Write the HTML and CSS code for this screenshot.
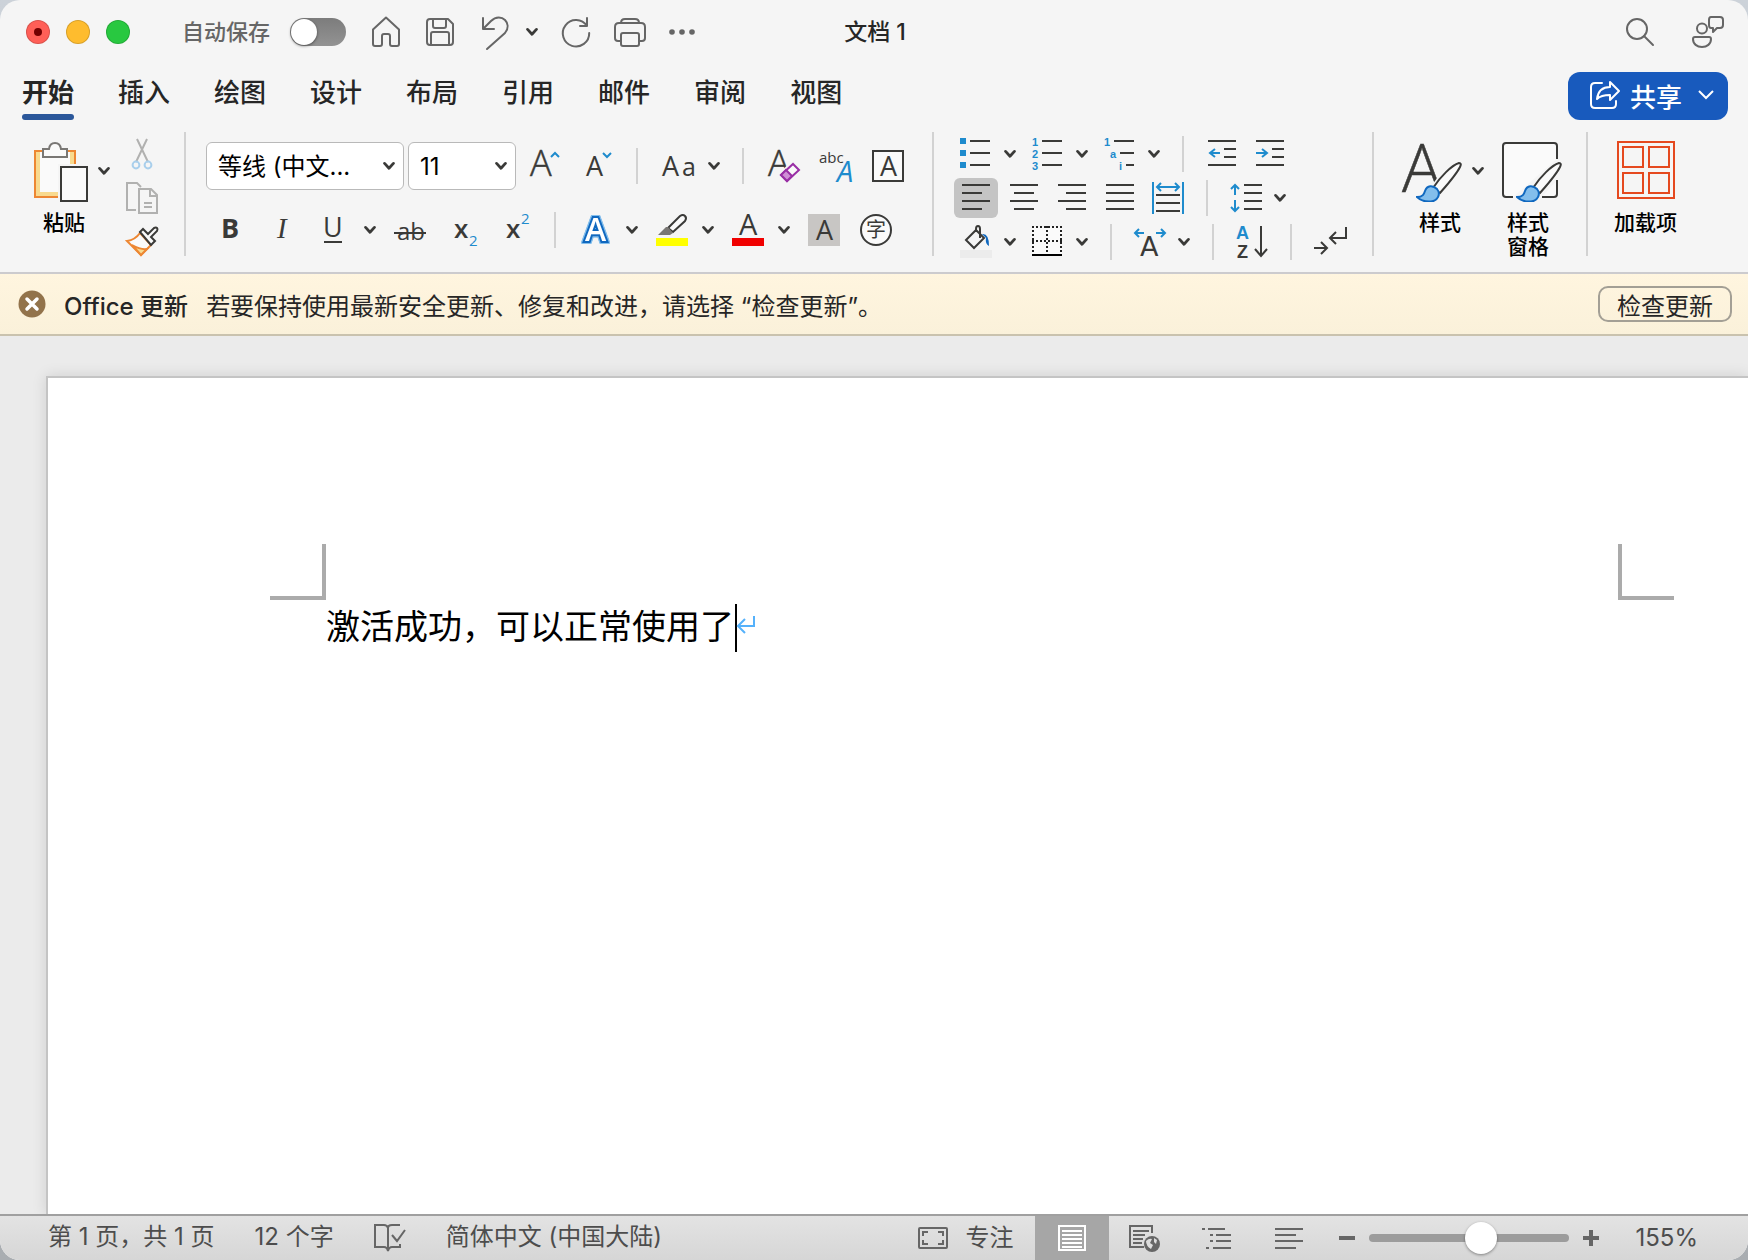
FILE: index.html
```html
<!DOCTYPE html>
<html lang="zh-CN">
<head>
    <meta charset="UTF-8">
    <title>文档1</title>
    <link rel="stylesheet" href="styles.css">
</head>
<body>
    <svg class="defs" aria-hidden="true">
        <symbol id="chevron" viewBox="0 0 12 10"><path d="M1.6 2.4 6 7.2l4.4-4.8" fill="none" stroke="currentColor" stroke-width="2.8" stroke-linecap="round" stroke-linejoin="round"/></symbol>
        <symbol id="brush" viewBox="0 0 46 40">
            <path d="M17 26C24 15 36 3 43 1q3 0 1 4C40 13 31 23 24 31z" fill="#fafafa" stroke="#f5f5f5" stroke-width="5"/>
            <path d="M17 26C24 15 36 3 43 1q3 0 1 4C40 13 31 23 24 31z" fill="#fafafa" stroke="#3a3a38" stroke-width="2"/>
            <path d="M1 35c6 0 7-3 8-6 2-6 8-6 12-2 4 5 1 12-6 12.500C9 40 4 38 1 35z" fill="#83beec" stroke="#1068bf" stroke-width="2"/>
        </symbol>
    </svg>
    <div class="window">
        <header class="titlebar">
            <div class="title-left">
                <div class="lights">
                    <button class="light light-red" aria-label="关闭"></button>
                    <button class="light light-yellow" aria-label="最小化"></button>
                    <button class="light light-green" aria-label="缩放"></button>
                </div>
                <label class="autosave">自动保存 <input type="checkbox" class="toggle"></label>
                <div class="quick">
                    <button aria-label="主页"><svg class="icon thin" viewBox="0 0 32 32"><path d="M3 13.500 16 1.500l13 12V28q0 2-2 2h-5q-2 0-2-2v-8q0-2-2-2h-4q-2 0-2 2v8q0 2-2 2H5q-2 0-2-2z"/></svg></button>
                    <button aria-label="保存"><svg class="icon thin" viewBox="0 0 32 32"><path d="M6 3h18l5 5v18q0 3-3 3H6q-3 0-3-3V6q0-3 3-3zM9 3v7q0 2 2 2h9q2 0 2-2V3M7 29V18q0-2 2-2h14q2 0 2 2v11"/></svg></button>
                    <div class="split">
                        <button aria-label="撤消"><svg class="icon thin" viewBox="0 0 32 32"><path d="M5 2v11h11M5 13 13 5c5-5 11-4 14-1s4 8 0 13L9 33"/></svg></button>
                        <button aria-label="撤消选项"><svg class="chev"><use href="#chevron"/></svg></button>
                    </div>
                    <button aria-label="重复"><svg class="icon thin" viewBox="0 0 32 32"><path d="M20 10h7V2M27 10A13.200 13.200 0 1 0 29.200 17"/></svg></button>
                    <button aria-label="打印"><svg class="icon thin" viewBox="0 0 32 32"><path d="M6 25H4q-3 0-3-3V11q0-4 4-4h22q4 0 4 4v11q0 3-3 3h-2M7 7q0-4 4-4h10q4 0 4 4M9 17h14q2 0 2 2v9q0 2-2 2H9q-2 0-2-2v-9q0-2 2-2z"/></svg></button>
                    <button aria-label="更多"><svg class="icon" viewBox="0 0 32 32" fill="#666"><circle cx="4" cy="16" r="2.800"/><circle cx="14" cy="16" r="2.800"/><circle cx="24" cy="16" r="2.800"/></svg></button>
                </div>
            </div>
            <h1 class="title">文档 1</h1>
            <div class="title-right">
                <button aria-label="搜索"><svg class="icon thin" viewBox="0 0 32 32"><circle cx="13" cy="13" r="10"/><path d="m20 20 9 9"/></svg></button>
                <button aria-label="批注"><svg class="icon thin" viewBox="0 0 32 32"><circle cx="10" cy="12.500" r="5"/><path d="M3 21h14q2 0 2 2c0 5-4 8-9 8s-9-3-9-8q0-2 2-2zM19 1h9q3 0 3 3v5q0 3-3 3h-3l-4 4v-4h-2q-2 0-2-3V4q0-3 2-3z"/></svg></button>
            </div>
        </header>

        <nav class="tabbar">
            <div class="tabs">
                <button class="tab active">开始</button>
                <button class="tab">插入</button>
                <button class="tab">绘图</button>
                <button class="tab">设计</button>
                <button class="tab">布局</button>
                <button class="tab">引用</button>
                <button class="tab">邮件</button>
                <button class="tab">审阅</button>
                <button class="tab">视图</button>
            </div>
            <button class="share">
                <svg class="icon" viewBox="0 0 32 32" fill="none" stroke="#fff" stroke-width="2" stroke-linejoin="round" stroke-linecap="round"><path d="M14 4H7q-4 0-4 4v17q0 4 4 4h17q4 0 4-4v-3M9 20c1-8 6-12 13-12V3l9 9-9 9v-5c-6 0-10 1-13 4z"/></svg>
                共享
                <svg class="share-chev" viewBox="0 0 16 10" fill="none" stroke="#fff" stroke-width="2"><path d="m1 1 7 7 7-7"/></svg>
            </button>
        </nav>

        <section class="ribbon">
            <div class="group clipboard">
                <div class="paste">
                    <button class="big">
                        <svg class="icon-big" viewBox="0 0 60 60"><path d="M1 9h40v46H1z" fill="#fafafa" stroke="#ed8733" stroke-width="2"/><path d="M4 10v42h23M38 10v14" fill="none" stroke="#f8da8f" stroke-width="4"/><path d="M44 22H24v36h30V22z" fill="#f5f5f5"/><path d="M9 7h6c1-8 11-8 12 0h6v8H9z" fill="#fafafa" stroke="#797774" stroke-width="2"/><path d="M27 25h26v34H27z" fill="#fafafa" stroke="#3a3a38" stroke-width="2"/></svg>
                        <span>粘贴</span>
                    </button>
                    <button class="big-arrow" aria-label="粘贴选项"><svg class="chev"><use href="#chevron"/></svg></button>
                </div>
                <div class="stack">
                    <button aria-label="剪切"><svg class="icon" viewBox="0 0 32 32" fill="none" stroke="#b1b1b0" stroke-width="2"><path d="M11 1 22 24M21 1 10 24"/><circle cx="10" cy="27" r="3.400" stroke="#a9cfec"/><circle cx="22" cy="27" r="3.400" stroke="#a9cfec"/></svg></button>
                    <button aria-label="复制"><svg class="icon" viewBox="0 0 32 32" fill="none" stroke="#b1b1b0" stroke-width="2"><path d="M10 28H1V1h10l4 4M13 7h12l6 6v18H13zM24 7v7h7M18 21h8M18 25h8"/></svg></button>
                    <button aria-label="格式刷"><svg class="icon" viewBox="0 0 32 32" fill="#fafafa" stroke-width="2"><path d="M1 15q8-1 13-8l11 12q-4 4-10 10z" stroke="#ed8733"/><path d="M6 19q9 5 15 4l-6 6z" fill="#f8da8f" stroke="#ed8733"/><path d="m14 6 3-3 5 5 6-6q2-1 3 0t0 3l-6 6 4 4-4 4z" stroke="#3a3a38"/></svg></button>
                </div>
            </div>

            <div class="group font-group">
                <div class="row">
                    <div class="combos">
                        <label class="combo combo-font"><select aria-label="字体"><option>等线 (中文...</option></select><svg class="chev"><use href="#chevron"/></svg></label>
                        <label class="combo combo-size"><select aria-label="字号"><option>11</option></select><svg class="chev"><use href="#chevron"/></svg></label>
                    </div>
                    <button class="tool" aria-label="增大字号"><svg class="icon" viewBox="0 0 32 32"><text x="2" y="26" font-size="36" class="light-letter">A</text><path class="blue" d="m23 7 4-4 4 4"/></svg></button>
                    <button class="tool" aria-label="减小字号"><svg class="icon" viewBox="0 0 32 32"><text x="6" y="26" font-size="27">A</text><path class="blue" d="m23 3 4 4 4-4"/></svg></button>
                    <i class="sep"></i>
                    <div class="split">
                        <button class="tool" aria-label="更改大小写"><svg class="icon" viewBox="0 0 32 32"><text x="0" y="26" font-size="27">A</text><text x="20" y="26" font-size="25">a</text></svg></button>
                        <button aria-label="大小写选项"><svg class="chev"><use href="#chevron"/></svg></button>
                    </div>
                    <i class="sep"></i>
                    <button class="tool" aria-label="清除格式"><svg class="icon" viewBox="0 0 32 32"><text x="0" y="26" font-size="36" class="light-letter">A</text><path d="m13 25 12-12 6 6-12 12z" fill="#fafafa" stroke="#f5f5f5" stroke-width="5"/><path d="m13 25 12-11 6 6-12 11z" fill="#fafafa" stroke="#992fa5" stroke-width="2"/><path d="m13 25 5-5 6 6-5 5z" fill="#d08fd6" stroke="#992fa5" stroke-width="2"/></svg></button>
                    <button class="tool" aria-label="拼音指南"><svg class="icon" viewBox="0 0 32 32"><text x="-1" y="13" font-size="15">abc</text><text x="17" y="32" font-size="29" class="blue-letter" font-style="italic">A</text></svg></button>
                    <button class="tool" aria-label="字符边框"><svg class="icon" viewBox="0 0 32 32"><path d="M1 1h30v30H1z" fill="#fafafa" stroke="#3a3a38" stroke-width="2"/><text x="8" y="26" font-size="27">A</text></svg></button>
                </div>
                <div class="row row-second">
                    <button class="tool" aria-label="加粗"><svg class="icon" viewBox="0 0 32 32"><text x="7" y="24" font-size="27" font-weight="700">B</text></svg></button>
                    <button class="tool" aria-label="倾斜"><svg class="icon" viewBox="0 0 32 32"><text x="11" y="24" font-size="29" class="serif-letter">I</text></svg></button>
                    <div class="split">
                        <button class="tool" aria-label="下划线"><svg class="icon" viewBox="0 0 32 32"><text x="5" y="23" font-size="27">U</text><path d="M6 28h18" stroke="#3a3a38" stroke-width="2"/></svg></button>
                        <button aria-label="下划线选项"><svg class="chev"><use href="#chevron"/></svg></button>
                    </div>
                    <button class="tool" aria-label="删除线"><svg class="icon" viewBox="0 0 32 32"><text x="3" y="26" font-size="24">ab</text><path d="M0 19h32" stroke="#3a3a38" stroke-width="2"/></svg></button>
                    <button class="tool" aria-label="下标"><svg class="icon" viewBox="0 0 32 32"><text x="8" y="24" font-size="26" font-weight="600">x</text><text x="23" y="32" font-size="15" class="blue-letter">2</text></svg></button>
                    <button class="tool" aria-label="上标"><svg class="icon" viewBox="0 0 32 32"><text x="8" y="24" font-size="26" font-weight="600">x</text><text x="23" y="10" font-size="15" class="blue-letter">2</text></svg></button>
                    <i class="sep"></i>
                    <div class="split">
                        <button class="tool" aria-label="文本效果"><svg class="icon" viewBox="0 0 32 32"><text x="5" y="27" font-size="32" font-weight="600" class="glow">A</text></svg></button>
                        <button aria-label="文本效果选项"><svg class="chev"><use href="#chevron"/></svg></button>
                    </div>
                    <div class="split">
                        <button class="tool" aria-label="突出显示"><svg class="icon" viewBox="0 0 32 32"><path d="M12 14 24 2q3-2 5 0t0 5L17 18z" fill="#fafafa" stroke="#3a3a38" stroke-width="2"/><path d="M10 13h2l5 6-3 2H2z" fill="#797774"/><path d="M0 24h32v8H0z" fill="#ff0"/></svg></button>
                        <button aria-label="突出显示选项"><svg class="chev"><use href="#chevron"/></svg></button>
                    </div>
                    <div class="split">
                        <button class="tool" aria-label="字体颜色"><svg class="icon" viewBox="0 0 32 32"><text x="7" y="21" font-size="29">A</text><path d="M0 24h32v8H0z" fill="#f00000"/></svg></button>
                        <button aria-label="字体颜色选项"><svg class="chev"><use href="#chevron"/></svg></button>
                    </div>
                    <button class="tool" aria-label="字符底纹"><svg class="icon" viewBox="0 0 32 32"><path d="M0 0h32v32H0z" fill="#c8c6c4"/><text x="8" y="26" font-size="27">A</text></svg></button>
                    <button class="tool" aria-label="带圈字符"><svg class="icon" viewBox="0 0 32 32"><circle cx="16" cy="16" r="15" fill="#fafafa" stroke="#3a3a38" stroke-width="2"/><text x="6" y="23" font-size="20">字</text></svg></button>
                </div>
            </div>

            <div class="group para-group">
                <div class="row">
                    <div class="split">
                        <button class="tool" aria-label="项目符号"><svg class="icon" viewBox="0 0 32 32"><path d="M0 0h6v6H0zM0 12h6v6H0zM0 24h6v6H0z" fill="#1e8bcd"/><path class="line" d="M10 3h20M10 15h20M10 27h20"/></svg></button>
                        <button aria-label="项目符号选项"><svg class="chev"><use href="#chevron"/></svg></button>
                    </div>
                    <div class="split">
                        <button class="tool" aria-label="编号"><svg class="icon" viewBox="0 0 32 32"><text class="blue-letter list-letter" x="0" y="8">1</text><text class="blue-letter list-letter" x="0" y="20">2</text><text class="blue-letter list-letter" x="0" y="32">3</text><path class="line" d="M10 3h20M10 15h20M10 27h20"/></svg></button>
                        <button aria-label="编号选项"><svg class="chev"><use href="#chevron"/></svg></button>
                    </div>
                    <div class="split">
                        <button class="tool" aria-label="多级列表"><svg class="icon" viewBox="0 0 32 32"><text class="blue-letter list-letter" x="0" y="8">1</text><text class="blue-letter list-letter" x="6" y="20">a</text><text class="blue-letter list-letter" x="15" y="32">i</text><path class="line" d="M10 3h20M16 15h14M22 27h8"/></svg></button>
                        <button aria-label="多级列表选项"><svg class="chev"><use href="#chevron"/></svg></button>
                    </div>
                    <i class="sep"></i>
                    <button class="tool" aria-label="减少缩进"><svg class="icon" viewBox="0 0 32 32"><path class="line" d="M2 3h28M18 11h12M18 19h12M2 27h28"/><path class="blue" d="M14 15H4m5-4-5 4 5 4"/></svg></button>
                    <button class="tool" aria-label="增加缩进"><svg class="icon" viewBox="0 0 32 32"><path class="line" d="M2 3h28M18 11h12M18 19h12M2 27h28"/><path class="blue" d="M2 15h11m-5-4 5 4-5 4"/></svg></button>
                </div>
                <div class="row">
                    <button class="tool selected" aria-label="左对齐" aria-pressed="true"><svg class="icon" viewBox="0 0 32 32"><path class="line" d="M2 3h28M2 11h20M2 19h28M2 27h20"/></svg></button>
                    <button class="tool" aria-label="居中"><svg class="icon" viewBox="0 0 32 32"><path class="line" d="M2 3h28M6 11h20M2 19h28M6 27h20"/></svg></button>
                    <button class="tool" aria-label="右对齐"><svg class="icon" viewBox="0 0 32 32"><path class="line" d="M2 3h28M10 11h20M2 19h28M10 27h20"/></svg></button>
                    <button class="tool" aria-label="两端对齐"><svg class="icon" viewBox="0 0 32 32"><path class="line" d="M2 3h28M2 11h28M2 19h28M2 27h28"/></svg></button>
                    <button class="tool" aria-label="分散对齐"><svg class="icon" viewBox="0 0 32 32"><path class="line" d="M4 13h24M4 21h24M4 29h24"/><path class="blue" d="M1 0v32M31 0v32M5 5h22M9 1 5 5l4 4M23 1l4 4-4 4"/></svg></button>
                    <i class="sep"></i>
                    <div class="split">
                        <button class="tool" aria-label="行距"><svg class="icon" viewBox="0 0 32 32"><path class="line" d="M14 3h18M14 11h18M14 19h18M14 27h18"/><path class="blue" d="M5 13V3M1 7l4-4 4 4M5 18v11M1 25l4 4 4-4"/></svg></button>
                        <button aria-label="行距选项"><svg class="chev"><use href="#chevron"/></svg></button>
                    </div>
                </div>
                <div class="row">
                    <div class="split">
                        <button class="tool" aria-label="底纹"><svg class="icon" viewBox="0 0 32 32"><path d="m6 14 10-10 8 8-10 10zM16 6V3q0-3 2-3t2 3v9" fill="none" stroke="#3a3a38" stroke-width="2"/><path d="M22 8q7-1 7 12-4-2-3-8z" fill="#1068bf"/><path d="M0 24h32v8H0z" fill="#ececec"/></svg></button>
                        <button aria-label="底纹选项"><svg class="chev"><use href="#chevron"/></svg></button>
                    </div>
                    <div class="split">
                        <button class="tool" aria-label="边框"><svg class="icon" viewBox="0 0 32 32"><path d="M0 1h30v28H0z" fill="#fafafa"/><path d="M0 1h30M0 15h30M1 0v28M15 0v28M29 0v28" fill="none" stroke="#222" stroke-width="2" stroke-dasharray="2 2"/><path d="M0 29h30" stroke="#000" stroke-width="2"/></svg></button>
                        <button aria-label="边框选项"><svg class="chev"><use href="#chevron"/></svg></button>
                    </div>
                    <i class="sep"></i>
                    <div class="split">
                        <button class="tool" aria-label="中文版式"><svg class="icon" viewBox="0 0 32 32"><text x="6" y="30" font-size="27" class="wide-letter">A</text><path class="blue" d="M10 7H1m4-4L1 7l4 4M22 7h9m-4-4 4 4-4 4"/></svg></button>
                        <button aria-label="中文版式选项"><svg class="chev"><use href="#chevron"/></svg></button>
                    </div>
                    <i class="sep"></i>
                    <button class="tool" aria-label="排序"><svg class="icon" viewBox="0 0 32 32"><text x="0" y="13" font-size="18" class="blue-letter sort-letter">A</text><text x="1" y="32" font-size="18" class="sort-letter">Z</text><path class="line" d="M25 0v30m-6-7 6 7 6-7"/></svg></button>
                    <i class="sep"></i>
                    <button class="tool" aria-label="显示编辑标记"><svg class="icon" viewBox="0 0 32 32"><path class="line" d="M0 22h13m-6-6 6 6-6 6M32 1v11H16m6-6-6 6 6 6"/></svg></button>
                </div>
            </div>

            <div class="group styles-group">
                <div class="paste">
                    <button class="big">
                        <svg class="icon-big" viewBox="0 0 60 60"><text x="0" y="50" font-size="66" class="light-letter">A</text><use href="#brush" x="14" y="20" width="46" height="40"/></svg>
                        <span class="label-styles">样式</span>
                    </button>
                    <button class="big-arrow" aria-label="样式选项"><svg class="chev"><use href="#chevron"/></svg></button>
                </div>
                <button class="big">
                    <svg class="icon-big" viewBox="0 0 60 60"><path d="M55 17V4q0-3-3-3H4Q1 1 1 4v48q0 3 3 3h7M55 38v14q0 3-3 3H40" fill="#fafafa" stroke="#3a3a38" stroke-width="2"/><use href="#brush" x="14" y="20" width="46" height="40"/></svg>
                    <span class="label-pane">样式<br>窗格</span>
                </button>
            </div>

            <div class="group addins">
                <button class="big">
                    <svg class="icon-big" viewBox="0 0 60 60" fill="none" stroke="#e5491f" stroke-width="2"><path d="M2 0h56v56H2zM7 5h20v20H7zM33 5h20v20H33zM7 31h20v20H7zM33 31h20v20H33z"/></svg>
                    <span>加载项</span>
                </button>
            </div>
        </section>

        <div class="notice">
            <button aria-label="关闭通知"><svg class="notice-icon" viewBox="0 0 28 28"><circle cx="14" cy="14" r="13.500" fill="#92734b"/><path d="m9 9 10 10M19 9 9 19" stroke="#fff" stroke-width="3.500" stroke-linecap="round"/></svg></button>
            <strong>Office 更新</strong>
            <span>若要保持使用最新安全更新、修复和改进，请选择 “检查更新”。</span>
            <button class="check">检查更新</button>
        </div>

        <main class="workspace">
            <div class="page">
                <div class="marks">
                    <i class="mark mark-left"></i>
                    <i class="mark mark-right"></i>
                </div>
                <p class="text">激活成功，可以正常使用了<i class="caret"></i><svg class="return" viewBox="0 0 18 20" fill="none" stroke="#55b1fb" stroke-width="2"><path d="M17 1v10H2M8 4l-7 7 7 7"/></svg></p>
            </div>
        </main>

        <footer class="status">
            <div class="status-left">
                <span>第 1 页，共 1 页</span>
                <span>12 个字</span>
                <button aria-label="拼写检查"><svg class="icon" viewBox="0 0 32 32" fill="none" stroke="#666" stroke-width="2"><path d="M26 4h-8q-4 0-4 3-1-3-4-3H1v22h9q3 0 4 4 1-4 4-4h8v-3M14 7v22M18 14l5 6 8-11"/></svg></button>
                <span>简体中文 (中国大陆)</span>
            </div>
            <div class="status-right">
                <button class="focus"><svg class="icon" viewBox="0 0 32 32" fill="none" stroke="#666" stroke-width="2"><rect x="2" y="6" width="28" height="20" rx="1"/><path d="M6 14v-4h5M21 10h5v4M26 18v4h-5M11 22H6v-4"/></svg>专注</button>
                <div class="views">
                    <button class="view current" aria-label="页面视图" aria-pressed="true"><svg class="icon" viewBox="0 0 32 32" fill="none" stroke="#fff" stroke-width="2"><path d="M3 4h26v24H3zM6 9h20M6 13h20M6 17h20M6 21h20M6 25h20"/></svg></button>
                    <button class="view" aria-label="Web 版式"><svg class="icon" viewBox="0 0 32 32" fill="none" stroke="#666" stroke-width="2"><path d="M15 25H1V4h22v7M4 9h16M4 13h12M4 17h10M4 21h9"/><circle cx="23" cy="22" r="8" fill="#666" stroke="none"/><path d="M17 19q3-3 6-2l-2 4 3 2-2 4q-5-3-5-8zM25 16l3 2-1 4-2-2z" fill="#ddd" stroke="none"/></svg></button>
                    <button class="view" aria-label="大纲"><svg class="icon" viewBox="0 0 32 32" stroke="#666" stroke-width="2"><path d="M1 7h3M7 7h17M9 13h3M15 13h15M9 19h3M15 19h15M5 26h3M12 26h18"/></svg></button>
                    <button class="view" aria-label="草稿"><svg class="icon" viewBox="0 0 32 32" stroke="#666" stroke-width="2"><path d="M2 7h28M2 13h21M2 19h28M2 26h21"/></svg></button>
                </div>
                <div class="zoom">
                    <button aria-label="缩小"><svg class="zoom-icon" viewBox="0 0 16 16"><path d="M0 8h16" stroke="#666" stroke-width="4"/></svg></button>
                    <input type="range" class="slider" min="0" max="100" value="57" aria-label="缩放">
                    <button aria-label="放大"><svg class="zoom-icon" viewBox="0 0 16 16"><path d="M0 8h16M8 0v16" stroke="#666" stroke-width="4"/></svg></button>
                </div>
                <span>155%</span>
            </div>
        </footer>
    </div>
</body>
</html>
```
FILE: styles.css
```css
* {
    box-sizing: border-box;
}
body {
    margin: 0;
    background: linear-gradient(#ccd2d9, #a9adb1);
    font-family: Inter, "Noto Sans CJK SC", sans-serif;
    font-size: 24px;
    color: #262626;
}
button {
    display: flex;
    align-items: center;
    padding: 0;
    border: none;
    background: none;
    font: inherit;
    color: inherit;
}
svg {
    display: block;
    flex: none;
    overflow: visible;
}
svg text {
    font-family: "Open Sans", "Noto Sans CJK SC", sans-serif;
    fill: #3a3a38;
}
.defs {
    position: absolute;
    width: 0;
    height: 0;
}
.window {
    display: flex;
    flex-direction: column;
    height: 100vh;
    border-radius: 20px;
    overflow: hidden;
    background: #f5f5f5;
}

/* icons */
.icon {
    width: 32px;
    height: 32px;
}
.icon-big {
    width: 60px;
    height: 60px;
}
.thin {
    fill: none;
    stroke: #666;
    stroke-width: 2;
    stroke-linejoin: round;
    stroke-linecap: round;
}
.chev {
    width: 12px;
    height: 10px;
    color: #3a3a38;
}
.line {
    fill: none;
    stroke: #3a3a38;
    stroke-width: 2;
}
.blue {
    fill: none;
    stroke: #1e8bcd;
    stroke-width: 2;
}
svg .blue-letter {
    fill: #1e8bcd;
}
svg .light-letter {
    font-weight: 300;
    stroke: #3a3a38;
    stroke-width: 0.5px;
}
svg .serif-letter {
    font-family: "Liberation Serif", serif;
    font-style: italic;
}
svg .wide-letter {
    font-family: "DejaVu Sans", sans-serif;
}
svg .list-letter {
    font-family: "Liberation Sans", sans-serif;
    font-size: 11px;
    font-weight: 700;
}
svg .sort-letter {
    font-family: "Liberation Sans", sans-serif;
    font-weight: 700;
}
svg .glow {
    fill: #fff;
    stroke: #1068bf;
    stroke-width: 4px;
    stroke-linejoin: miter;
    stroke-miterlimit: 2;
    paint-order: stroke;
    filter: drop-shadow(1px 0 0 #83beec) drop-shadow(-1px 0 0 #83beec) drop-shadow(0 1px 0 #83beec) drop-shadow(0 -1px 0 #83beec);
}

/* title bar */
.titlebar {
    display: grid;
    grid-template-columns: 1fr auto 1fr;
    align-items: center;
    height: 64px;
    padding: 0 24px 0 26px;
}
.title-left,
.title-right,
.lights,
.quick,
.autosave {
    display: flex;
    align-items: center;
}
.lights {
    gap: 16px;
}
.light {
    justify-content: center;
    width: 24px;
    height: 24px;
    border: 1px solid rgba(0, 0, 0, 0.15);
    border-radius: 50%;
}
.light-red {
    background: #ff5f57;
}
.light-red::after {
    content: "";
    width: 8px;
    height: 8px;
    border-radius: 50%;
    background: #730000;
}
.light-yellow {
    background: #febc2e;
}
.light-green {
    background: #28c840;
}
.autosave {
    gap: 20px;
    margin: 0 24px 0 52px;
    font-size: 22px;
    font-weight: 500;
    line-height: 28px;
    color: #666;
}
.toggle {
    appearance: none;
    width: 56px;
    height: 28px;
    margin: 0;
    padding: 1px;
    border-radius: 14px;
    background: linear-gradient(#7c7c7c, #939393);
}
.toggle::before {
    content: "";
    display: block;
    width: 26px;
    height: 26px;
    border-radius: 50%;
    background: #fff;
    box-shadow: 0 1px 3px rgba(0, 0, 0, 0.5);
}
.quick {
    gap: 22px;
}
.quick .split {
    gap: 16px;
}
.title {
    margin: 0;
    font-size: 23px;
    font-weight: 500;
    line-height: 28px;
}
.title-right {
    justify-content: flex-end;
    gap: 36px;
}

/* tabs */
.tabbar {
    display: flex;
    justify-content: space-between;
    align-items: center;
    height: 64px;
    padding: 0 20px 0 22px;
}
.tabs {
    display: flex;
    gap: 44px;
}
.tab {
    flex-direction: column;
    font-size: 26px;
    font-weight: 500;
    line-height: 42px;
}
.tab::after {
    content: "";
    width: 100%;
    height: 6px;
    border-radius: 3px;
}
.tab.active {
    font-weight: 700;
}
.tab.active::after {
    background: #2b579a;
}
.share {
    gap: 10px;
    height: 48px;
    padding: 0 14px 2px 20px;
    border-radius: 12px;
    background: #185abd;
    font-size: 26px;
    font-weight: 500;
    color: #fff;
}
.share-chev {
    width: 16px;
    height: 10px;
    margin-left: 6px;
}

/* ribbon */
.ribbon {
    display: flex;
    height: 146px;
    padding-top: 4px;
    border-bottom: 2px solid #cccbce;
}
.group {
    display: flex;
    height: 124px;
    border-right: 2px solid #d2d2d2;
}
.row,
.split,
.combos {
    display: flex;
    align-items: center;
}
.sep {
    width: 2px;
    height: 36px;
    margin: 0 6px;
    background: #d2d2d2;
}
.row {
    gap: 16px;
}
.split {
    gap: 14px;
}
.clipboard {
    gap: 16px;
    width: 186px;
    padding: 6px 0 0 34px;
}
.paste {
    display: flex;
    align-items: flex-start;
    gap: 4px;
}
.big {
    flex-direction: column;
    gap: 9px;
    font-size: 21px;
    font-weight: 500;
    line-height: 24px;
    color: #000;
}
.paste .big {
    padding-top: 4px;
}
.big-arrow {
    padding-top: 28px;
}
.stack {
    display: flex;
    flex-direction: column;
    gap: 12px;
}
.label-styles {
    padding-left: 16px;
}
.label-pane {
    padding-right: 8px;
}
.font-group {
    flex-direction: column;
    gap: 18px;
    width: 748px;
    padding: 10px 0 0 20px;
}
.font-group .tool {
    padding: 0 2px;
}
.font-group .split .tool {
    padding-right: 0;
}
.row-second {
    height: 44px;
    padding-left: 6px;
}
.combos {
    gap: 4px;
    margin-right: -6px;
}
.combo {
    display: grid;
    align-items: center;
}
.combo select,
.combo svg {
    grid-area: 1 / 1;
}
.combo svg {
    justify-self: end;
    margin-right: 9px;
    pointer-events: none;
}
.combo select {
    appearance: none;
    width: 100%;
    height: 48px;
    padding: 0 0 0 11px;
    border: 1px solid #b9b9b9;
    border-radius: 6px;
    background: #fff;
    font: inherit;
    color: #000;
}
.combo-font {
    width: 198px;
}
.combo-size {
    width: 108px;
}
.para-group {
    flex-direction: column;
    width: 440px;
    padding-left: 26px;
}
.para-group .row {
    flex: none;
    height: 44px;
}
.para-group .split {
    gap: 12px;
}
.tool.selected {
    margin: 0 -6px;
    padding: 4px 6px;
    border-radius: 6px;
    background: #c4c4c4;
}
.styles-group {
    align-items: flex-start;
    gap: 18px;
    width: 214px;
    padding: 10px 0 0 28px;
}
.styles-group .paste .big {
    padding-top: 0;
}
.styles-group .paste {
    gap: 10px;
}
.styles-group .big-arrow {
    padding-top: 24px;
}
.addins {
    flex: 1;
    align-items: flex-start;
    padding: 10px 0 0 26px;
    border: none;
}

/* update notice */
.notice {
    display: flex;
    align-items: center;
    gap: 18px;
    height: 62px;
    padding: 0 16px 0 18px;
    border-bottom: 2px solid #c9c2ae;
    background: linear-gradient(#fff5df, #faf1da);
}
.notice-icon {
    width: 28px;
    height: 28px;
}
.notice strong {
    font-weight: 500;
}
.check {
    height: 36px;
    margin-left: auto;
    padding: 0 17px;
    border: 2px solid #a39f95;
    border-radius: 10px;
}

/* document */
.workspace {
    flex: 1;
    min-height: 0;
    padding: 40px 0 0 46px;
    overflow: hidden;
    background: #ebebeb;
}
.page {
    height: 100%;
    padding: 166px 74px 0 222px;
    border: 2px solid #c4c4c4;
    border-width: 2px 0 0 2px;
    background: #fff;
    box-shadow: 0 0 14px rgba(0, 0, 0, 0.12);
}
.marks {
    display: flex;
    justify-content: space-between;
}
.mark {
    width: 56px;
    height: 56px;
    border: 0 solid #ababab;
    border-bottom-width: 4px;
}
.mark-left {
    border-right-width: 4px;
}
.mark-right {
    border-left-width: 4px;
}
.text {
    display: flex;
    align-items: flex-start;
    margin: 4px 0 0 56px;
    font-family: "Noto Sans CJK SC", sans-serif;
    font-size: 34px;
    line-height: 42px;
    color: #000;
}
.caret {
    width: 2px;
    height: 48px;
    margin-left: 1px;
    background: #000;
}
.return {
    width: 18px;
    height: 42px;
}

/* status bar */
.status {
    display: flex;
    justify-content: space-between;
    height: 46px;
    padding: 0 50px 0 48px;
    border-top: 2px solid #a0a0a0;
    background: linear-gradient(#e3e3e3, #d6d6d6);
    line-height: 30px;
    color: #4d4d4d;
}
.status-left,
.status-right,
.zoom {
    display: flex;
    align-items: center;
}
.status-left {
    gap: 40px;
    padding-bottom: 2px;
}
.focus {
    gap: 16px;
    margin-right: 22px;
}
.views {
    display: flex;
    height: 100%;
    margin-right: 14px;
}
.view {
    justify-content: center;
    width: 72px;
}
.view.current {
    width: 74px;
    background: #a6a6a6;
}
.zoom {
    gap: 14px;
    margin-right: 36px;
}
.zoom-icon {
    width: 16px;
    height: 16px;
}
.slider {
    appearance: none;
    width: 200px;
    height: 32px;
    margin: 0;
    background: none;
}
.slider::-webkit-slider-runnable-track {
    height: 8px;
    border-radius: 4px;
    background: #9c9c9c;
}
.slider::-webkit-slider-thumb {
    appearance: none;
    width: 32px;
    height: 32px;
    margin-top: -12px;
    border-radius: 50%;
    background: #fff;
    box-shadow: 0 1px 3px rgba(0, 0, 0, 0.4);
}
```
